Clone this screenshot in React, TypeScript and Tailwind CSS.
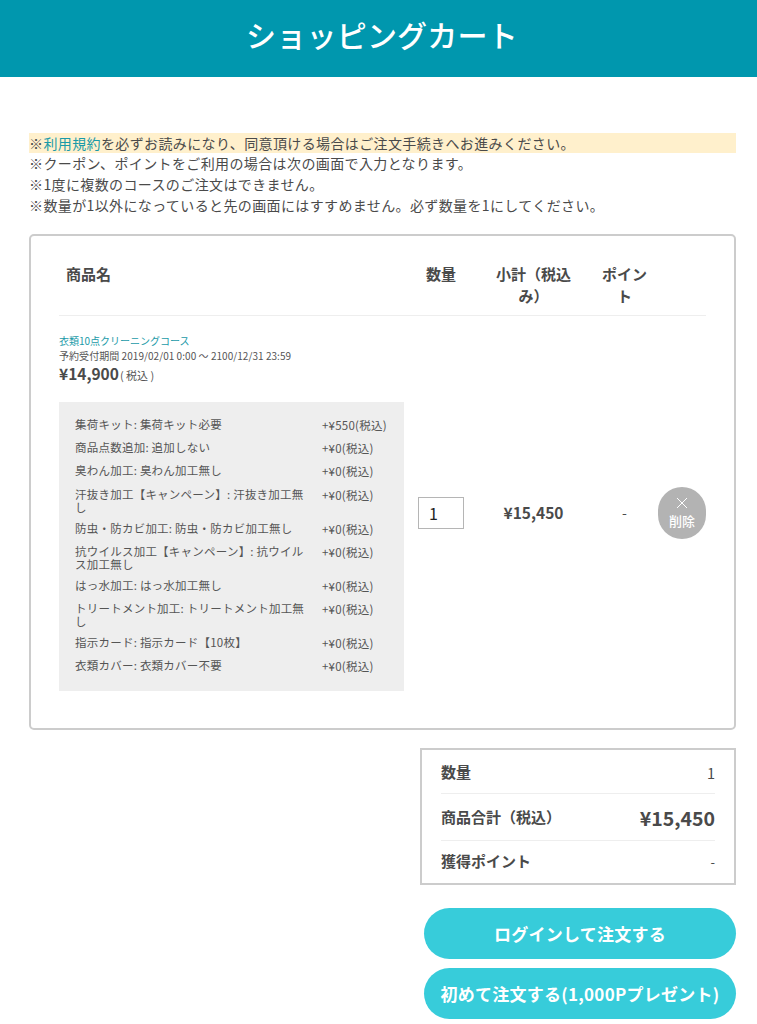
const options: [string, string][] = [
  ["集荷キット: 集荷キット必要", "+¥550(税込)"],
  ["商品点数追加: 追加しない", "+¥0(税込)"],
  ["臭わん加工: 臭わん加工無し", "+¥0(税込)"],
  ["汗抜き加工【キャンペーン】: 汗抜き加工無し", "+¥0(税込)"],
  ["防虫・防カビ加工: 防虫・防カビ加工無し", "+¥0(税込)"],
  ["抗ウイルス加工【キャンペーン】: 抗ウイルス加工無し", "+¥0(税込)"],
  ["はっ水加工: はっ水加工無し", "+¥0(税込)"],
  ["トリートメント加工: トリートメント加工無し", "+¥0(税込)"],
  ["指示カード: 指示カード【10枚】", "+¥0(税込)"],
  ["衣類カバー: 衣類カバー不要", "+¥0(税込)"],
];

export default function App() {
  return (
    <div className="font-['Noto_Sans_CJK_JP','Noto_Sans',sans-serif] w-[757px] h-[1024px] overflow-hidden bg-white text-[#4a4a4a]">
      <header className="h-[77px] bg-[#0097ae] flex items-center justify-center pb-[9px] pl-[7px]">
        <h1 className="text-[30px] font-medium text-white tracking-[0.2px] leading-none">ショッピングカート</h1>
      </header>

      <div className="pl-[29px] pr-[21px] pt-[56px]">
        <div className="text-[14px] leading-[21px] tracking-[0.38px]">
          <p className="bg-[#fff0cc] h-[20px] leading-[20px]">
            ※<span className="text-[#1a9aa8]">利用規約</span>を必ずお読みになり、同意頂ける場合はご注文手続きへお進みください。
          </p>
          <p>※クーポン、ポイントをご利用の場合は次の画面で入力となります。</p>
          <p>※1度に複数のコースのご注文はできません。</p>
          <p>※数量が1以外になっていると先の画面にはすすめません。必ず数量を1にしてください。</p>
        </div>

        <section className="mt-[18px] h-[496px] border-2 border-[#cccccc] rounded-[5px] px-[28px] pt-[8px]">
          <div className="flex h-[72px] border-b border-[#eeeeee] text-[15px] font-bold leading-[22px] pt-[19px]">
            <div className="w-[359px] pl-[7px]">商品名</div>
            <div className="w-[46px] text-center whitespace-nowrap">数量</div>
            <div className="w-[135px] ml-[2px] px-[28px] text-center">小計（税込み）</div>
            <div className="w-[47px] text-center">ポイント</div>
          </div>

          <div className="flex items-center pt-[18px]">
            <div className="w-[359px] shrink-0">
              <div className="text-[10px] leading-[13px] text-[#1a9aa8]">衣類10点クリーニングコース</div>
              <div className="text-[10px] leading-[15px] mt-[1px] tracking-[0.05px] text-[#555555]">予約受付期間 2019/02/01 0:00 〜 2100/12/31 23:59</div>
              <div className="h-[23px] -mt-[1px] flex items-baseline">
                <span className="text-[15.5px] font-bold">¥14,900</span>
                <span className="text-[11px] ml-[1px] text-[#555555]">( 税込 )</span>
              </div>
              <div className="mt-[17px] w-[345px] h-[289px] bg-[#eeeeee] pl-[16px] pt-[16px] text-[11.5px] tracking-[0.02em] text-[#555555]">
                {options.map(([name, price]) => (
                  <div key={name} className="flex min-h-[23.2px]">
                    <div className="w-[232px] shrink-0 mr-[15px] leading-[13.5px] pb-[7px]">{name}</div>
                    <div className="leading-[13.5px] pt-[1px] whitespace-nowrap">{price}</div>
                  </div>
                ))}
              </div>
            </div>

            <div className="w-[46px] shrink-0">
              <div className="w-[46px] h-[32px] border border-[#b5b5b5] flex items-center pl-[10px] text-[16px] text-[#222222]">1</div>
            </div>
            <div className="w-[135px] ml-[2px] shrink-0 text-center text-[15.5px] font-bold">¥15,450</div>
            <div className="w-[47px] shrink-0 text-center text-[14px]">-</div>
            <div className="ml-[10px] w-[48px] h-[52px] shrink-0 rounded-full bg-[#b3b3b3] text-white flex flex-col items-center justify-center pt-[2px]">
              <svg width="12" height="12" viewBox="0 0 12 12" className="stroke-white -mt-[1px]" fill="none" strokeWidth="1">
                <path d="M1 1l10 10M11 1L1 11" />
              </svg>
              <span className="text-[13px] font-medium leading-[18px] mt-[3px]">削除</span>
            </div>
          </div>
        </section>

        <div className="flex flex-col items-end">
          <div className="mt-[18px] w-[316px] h-[137px] border-2 border-[#cccccc] px-[19px] text-[15px]">
            <div className="h-[44px] border-b border-[#eeeeee] flex items-center justify-between font-bold pt-[2px]">
              <span>数量</span>
              <span className="font-normal text-[14.5px]">1</span>
            </div>
            <div className="h-[47px] border-b border-[#eeeeee] flex items-center justify-between font-bold pt-[1px]">
              <span>商品合計（税込）</span>
              <span className="text-[19.5px]">¥15,450</span>
            </div>
            <div className="h-[42px] flex items-center justify-between font-bold pb-[1px]">
              <span>獲得ポイント</span>
              <span className="font-normal text-[13px]">-</span>
            </div>
          </div>

          <button className="mt-[23px] w-[312px] h-[51px] rounded-full bg-[#37ccda] text-white text-[17px] font-bold tracking-[0.26px]">ログインして注文する</button>
          <button className="mt-[9px] w-[312px] h-[51px] rounded-full bg-[#37ccda] text-white text-[17px] font-bold tracking-[0.26px] whitespace-nowrap">初めて注文する(1,000Pプレゼント)</button>
        </div>
      </div>
    </div>
  );
}
